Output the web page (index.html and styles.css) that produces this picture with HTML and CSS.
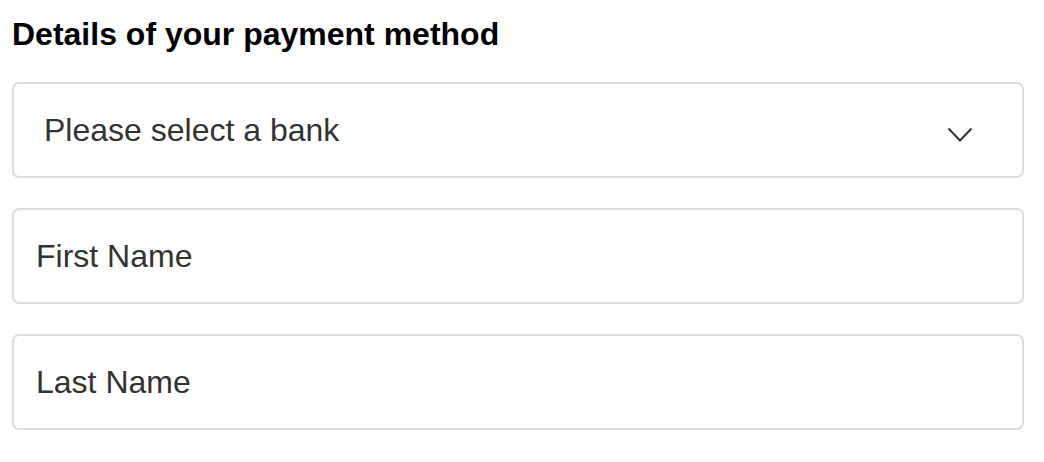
FILE: index.html
```html
<!DOCTYPE html>
<html lang="en">
<head>
<meta charset="utf-8">
<title>Payment method</title>
<link rel="stylesheet" href="styles.css">
</head>
<body>
<form class="payment">
  <h1 class="title">Details of your payment method</h1>
  <div class="field select-field">
    <span class="select-label">Please select a bank</span>
    <svg class="chevron" width="26" height="16" viewBox="0 0 26 16" aria-hidden="true">
      <polyline points="1.5,1.5 13,13.5 24.5,1.5" fill="none" stroke="#333" stroke-width="2"/>
    </svg>
  </div>
  <input class="field text-field" type="text" placeholder="First Name">
  <input class="field text-field" type="text" placeholder="Last Name">
</form>
</body>
</html>
```
FILE: styles.css
```css
* { box-sizing: border-box; }
html, body { margin: 0; padding: 0; background: #fff; }
body { font-family: "Liberation Sans", Arial, Helvetica, sans-serif; }
.payment {
  display: flex;
  flex-direction: column;
  padding: 14px 21px 0 12px;
}
.title {
  margin: 0 0 28px;
  font-size: 32px;
  line-height: 40px;
  font-weight: bold;
  color: #000;
}
.field {
  width: 1012px;
  height: 96px;
  border: 2px solid #dddddd;
  border-radius: 7px;
  background: #fff;
  font-family: inherit;
  font-size: 32px;
  color: #333;
  margin: 0 0 30px;
}
.select-field {
  display: flex;
  align-items: center;
  justify-content: space-between;
  padding: 0 49px 0 30px;
}
.select-label { line-height: 40px; }
.chevron { display: block; margin-top: 10px; }
.text-field {
  display: block;
  padding: 0 22px;
  outline: none;
}
.text-field::placeholder { color: #333; opacity: 1; }
```
